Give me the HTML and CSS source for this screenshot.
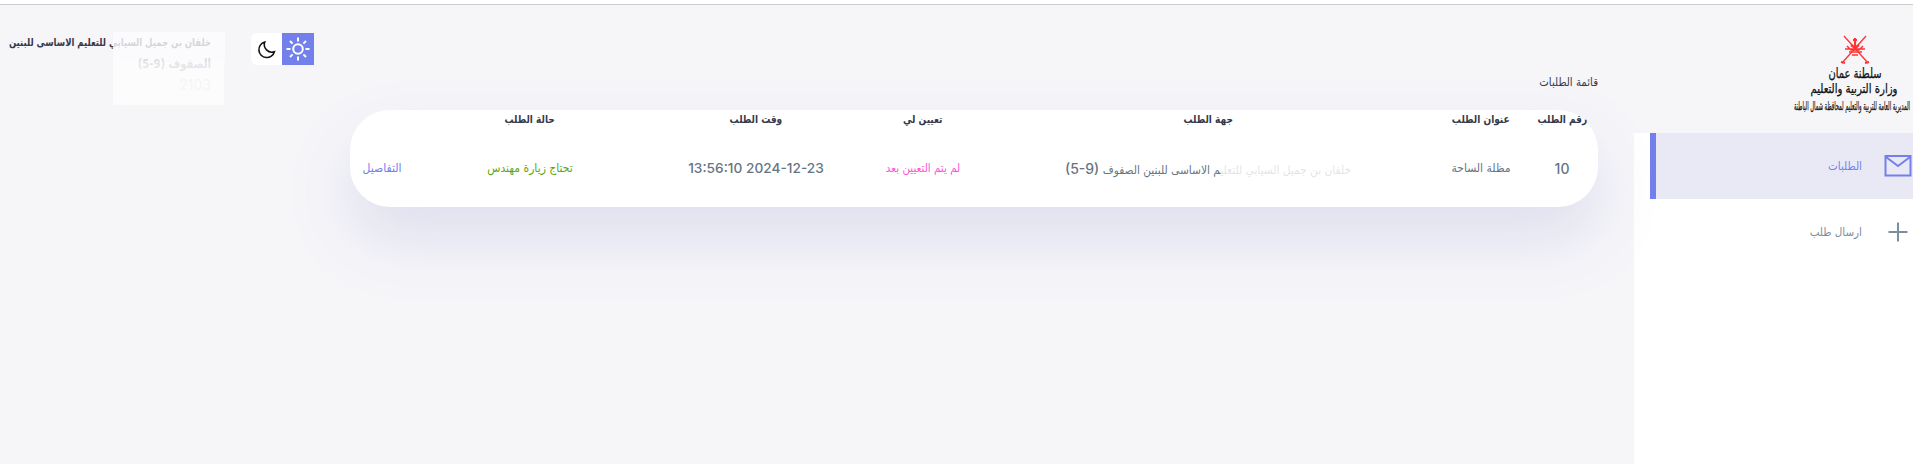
FILE: index.html
```html
<!DOCTYPE html>
<html lang="ar" dir="rtl">
<head>
<meta charset="utf-8">
<title>قائمة الطلبات</title>
<link rel="stylesheet" href="styles.css">
</head>
<body>
<div class="container">
  <aside class="side">
    <svg class="logo" viewBox="0 0 123 84" direction="rtl">
      <g class="emblem">
        <path d="M54 3L78 30M76 3L52 30" stroke-width="1.3"/>
        <path d="M51 29l4 1M79 29l-4 1" stroke-width="2"/>
        <path d="M55 16h20M57 13l4 4h8l4-4M59 19h13M62 22h6" stroke-width="1.500"/>
        <path d="M65 5v12M63 7h4M61 12l4 3 4-3" stroke-width="2.200"/>
      </g>
      <text class="logo-a" x="65" y="45" textLength="53" lengthAdjust="spacingAndGlyphs">سلطنة عمان</text>
      <text class="logo-b" x="64" y="60" textLength="87" lengthAdjust="spacingAndGlyphs">وزارة التربية والتعليم</text>
      <text class="logo-c" x="62" y="77" textLength="116" lengthAdjust="spacingAndGlyphs">المديرية العامة للتربية والتعليم لمحافظة شمال الباطنة</text>
    </svg>
    <nav class="menu">
      <a class="item active">
        <svg viewBox="0 0 28 24"><path d="M1.500 2h25v19.500h-25zM2 3l12 9 12-9"/></svg>
        <span>الطلبات</span>
      </a>
      <a class="item">
        <svg viewBox="0 0 28 24"><path d="M14 2.500v19M4.500 12h19"/></svg>
        <span>ارسال طلب</span>
      </a>
    </nav>
  </aside>
  <main class="main">
    <h2 class="title">قائمة الطلبات</h2>
    <section class="card">
      <div class="row head">
        <b>رقم الطلب</b><b>عنوان الطلب</b><b>جهة الطلب</b><b>تعيين لي</b><b>وقت الطلب</b><b>حالة الطلب</b><b></b>
      </div>
      <div class="row">
        <span class="num">10</span>
        <span>مظلة الساحة</span>
        <span class="school"><span class="faint">خلفان بن جميل السيابي للتعلي</span>م الاساسى للبنين الصفوف <bdi class="num">(5-9)</bdi></span>
        <span class="pink">لم يتم التعيين بعد</span>
        <span class="num time" dir="ltr">13:56:10 2024-12-23</span>
        <span class="green">تحتاج زيارة مهندس</span>
        <span class="violet">التفاصيل</span>
      </div>
    </section>
  </main>
  <header class="top">
    <div class="toggle">
      <span class="mode on"><svg viewBox="0 0 24 24"><circle cx="12" cy="12" r="4.800"/><path d="M12 .5v4M12 19.500v4M.5 12h4M19.500 12h4M4 4l2.600 2.600M17.400 17.400l2.600 2.600M4 20l2.600-2.600M17.400 6.600l2.600-2.600"/></svg></span>
      <span class="mode"><svg viewBox="0 0 24 24"><path d="M10 3.500A9 9 0 1 0 21 14.500A8.600 8.600 0 0 1 10 3.500Z"/></svg></span>
    </div>
    <div class="user">
      <b>خلفان بن جميل السيابي للتعليم الاساسى للبنين</b>
      <b class="second">الصفوف <bdi>(5-9)</bdi></b>
      <small>2103</small>
      <i class="patch"></i><i class="patch low"></i>
    </div>
  </header>
</div>
</body>
</html>
```
FILE: styles.css
```css
* { box-sizing: border-box; margin: 0; padding: 0; }
body { height: 464px; overflow: hidden; background: #f6f6f9; border-top: 4px solid #fff; font: 12px "DejaVu Sans Condensed", "DejaVu Sans", sans-serif; font-stretch: condensed; color: #363949; }
.container { display: grid; grid-template-columns: 279px 36px 1248px 36px 314px; height: 460px; border-top: 1px solid #ccc; }
.side { grid-column: 1; display: flex; flex-direction: column; align-items: stretch; }
.logo { width: 123px; height: 84px; margin-top: 28px; overflow: visible; }
.logo text { text-anchor: middle; fill: #111; stroke: #111; stroke-width: .25px; }
.logo-a { font-size: 14px; }
.logo-b { font-size: 13px; }
.logo-c { font-size: 12px; }
.emblem path { fill: none; stroke: #f33; }
.menu { flex: 1; margin-top: 16px; background: #fff; }
.item { display: flex; align-items: center; height: 66px; margin-left: 16px; color: #7d8da1; font-size: 11.5px; }
.item svg { width: 28px; height: 24px; margin-right: 1px; margin-left: 22px; fill: none; stroke: currentColor; stroke-width: 2; }
.active { background: #e9e9f5; color: #7380ec; border-left: 6px solid #7380ec; }
.main { grid-column: 3; padding-top: 68px; }
.title { height: 37px; font-size: 11.3px; font-weight: 400; line-height: 19px; }
.card { height: 97px; border-radius: 40px; background: #fff; box-shadow: 0 32px 64px rgba(132, 132, 200, .2); color: #677483; }
.row { display: grid; grid-template-columns: 72px 90px 456px 114px 220px 232px 64px; height: 78px; align-items: center; justify-items: center; white-space: nowrap; }
.head { height: 19px; color: #363949; font-size: 11px; }
.head b { transform: scaleX(.91); }
.num { font-family: Inter, sans-serif; font-size: 14px; font-weight: 500; }
.time { font-size: 13.7px; }
.faint { opacity: .18; }
.school { font-size: 11.8px; }
.school .num { font-size: 14px; }
.pink { color: #ff4fd8; font-size: 11.5px; }
.green { color: #5fa512; }
.violet { color: #7380ec; }
.top { grid-column: 5; display: flex; justify-content: flex-start; padding-top: 28px; }
.toggle { display: flex; width: 63px; height: 32px; background: #fff; border-radius: 6px; }
.mode { width: 31px; display: grid; place-items: center; color: #111; }
.mode svg { width: 21px; height: 21px; fill: none; stroke: currentColor; stroke-width: 1.8; }
.mode.on { width: 32px; background: #7380ec; color: #fff; }
.on svg { width: 24px; height: 24px; stroke-width: 2; }
.user { position: relative; width: 203px; margin-right: 40px; font-size: 11px; line-height: 21px; white-space: nowrap; }
.user b, .user small { display: block; transform: scaleX(.86); transform-origin: right; }
.user b:first-child { margin-top: -1px; }
.user .second { font-size: 13px; opacity: .8; }
.user small { font: 14px Inter, sans-serif; line-height: 21px; opacity: .3; transform: none; }
.patch { position: absolute; left: 105px; top: -1px; width: 112px; height: 30px; background: rgba(253, 253, 254, .8); }
.low { top: 29px; width: 111px; height: 43px; background: rgba(253, 253, 254, .86); }
```
